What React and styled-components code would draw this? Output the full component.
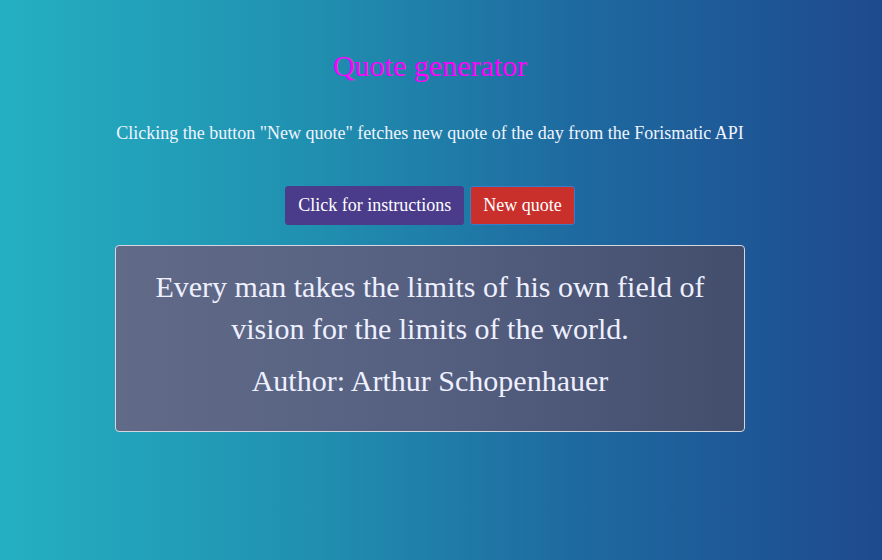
import React from 'react';
import styled, { createGlobalStyle } from 'styled-components';

const GlobalStyle = createGlobalStyle`
  html, body {
    margin: 0;
    height: 100%;
  }
  body {
    font-family: "Liberation Serif", "Times New Roman", serif;
    background: linear-gradient(90deg, #24b0c2 0%, #2090b0 35%, #1e6aa0 65%, #1e4a8e 100%);
    min-height: 560px;
  }
`;

const Page = styled.main`
  display: flex;
  flex-direction: column;
  align-items: center;
  padding: 49px 22px 0 0;
`;

const Title = styled.h1`
  margin: 0;
  font-weight: normal;
  font-size: 30px;
  color: #ff00ff;
`;

const Subtitle = styled.p`
  margin: 40px 0 0;
  font-size: 18px;
  color: #f0f4ff;
`;

const ButtonRow = styled.div`
  display: flex;
  gap: 6px;
  margin-top: 42px;
`;

const Button = styled.button`
  font-family: "Liberation Serif", "Times New Roman", serif;
  font-size: 18px;
  color: #ffffff;
  background: ${(p) => (p.$danger ? '#c9302c' : '#4a3b8b')};
  border: 1px solid ${(p) => (p.$danger ? '#3a7cc8' : '#4a3b8b')};
  border-radius: 3px;
  padding: 0 12px;
  height: 39px;
  cursor: pointer;
`;

const QuoteCard = styled.section`
  box-sizing: border-box;
  width: 630px;
  margin-top: 20px;
  padding: 20px 30px 29px;
  border: 1px solid #d6d6e0;
  border-radius: 4px;
  background: linear-gradient(90deg, #616b88 0%, #555f80 50%, #434d6c 100%);
  text-align: center;
  color: #eef0ff;
`;

const QuoteText = styled.p`
  margin: 0;
  font-size: 30px;
  line-height: 42px;
`;

const Author = styled.p`
  margin: 10px 0 0;
  font-size: 30px;
  line-height: 42px;
`;

export default function App() {
  return (
    <>
      <GlobalStyle />
      <Page>
        <Title>Quote generator</Title>
        <Subtitle>
          Clicking the button "New quote" fetches new quote of the day from the Forismatic API
        </Subtitle>
        <ButtonRow>
          <Button>Click for instructions</Button>
          <Button $danger>New quote</Button>
        </ButtonRow>
        <QuoteCard>
          <QuoteText>
            Every man takes the limits of his own field of vision for the limits of the world.
          </QuoteText>
          <Author>Author: Arthur Schopenhauer</Author>
        </QuoteCard>
      </Page>
    </>
  );
}
